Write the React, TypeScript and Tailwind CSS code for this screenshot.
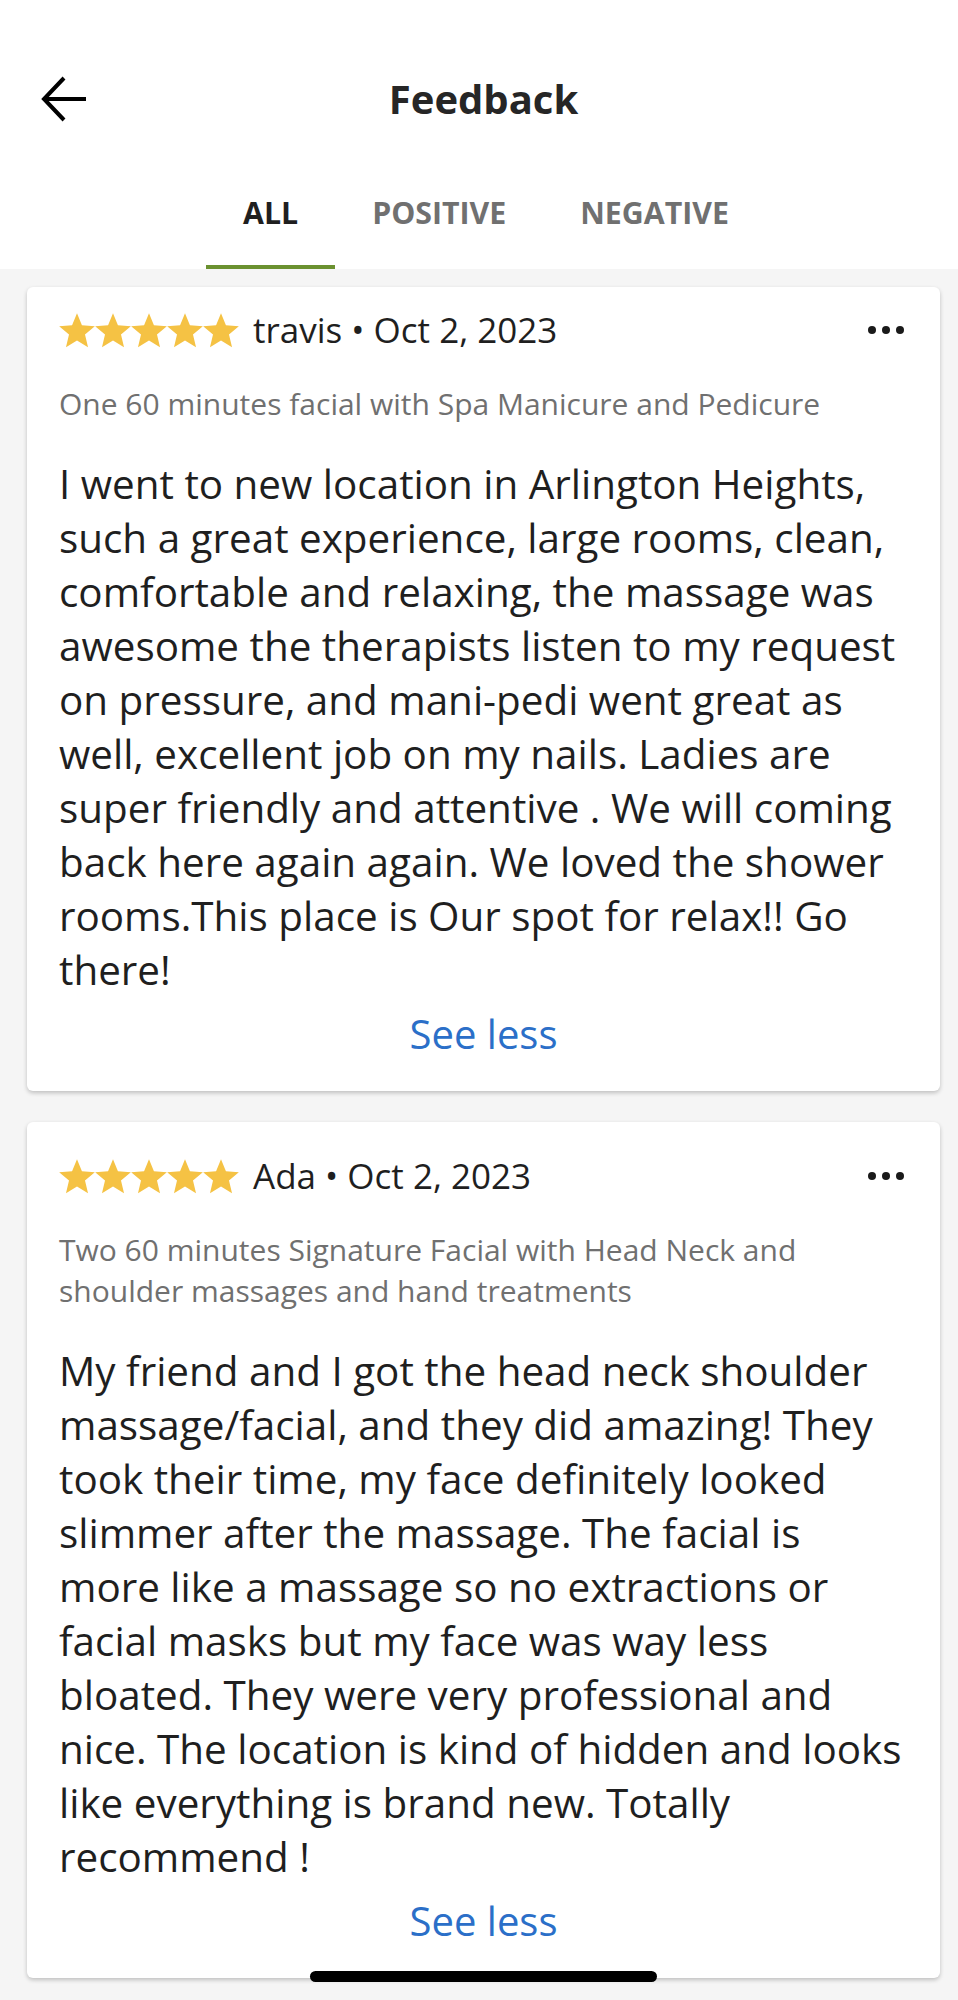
import { useState } from 'react';

type Review = {
  name: string;
  date: string;
  service: string;
  text: string;
};

const reviews: Review[] = [
  {
    name: 'travis',
    date: 'Oct 2, 2023',
    service: 'One 60 minutes facial with Spa Manicure and Pedicure',
    text: 'I went to new location in Arlington Heights, such a great experience, large rooms, clean, comfortable and relaxing, the massage was awesome the therapists listen to my request on pressure, and mani-pedi went great as well, excellent job on my nails. Ladies are super friendly and attentive . We will coming back here again again. We loved the shower rooms.This place is Our spot for relax!! Go there!',
  },
  {
    name: 'Ada',
    date: 'Oct 2, 2023',
    service: 'Two 60 minutes Signature Facial with Head Neck and shoulder massages and hand treatments',
    text: 'My friend and I got the head neck shoulder massage/facial, and they did amazing! They took their time, my face definitely looked slimmer after the massage. The facial is more like a massage so no extractions or facial masks but my face was way less bloated. They were very professional and nice. The location is kind of hidden and looks like everything is brand new. Totally recommend !',
  },
];

const tabs = ['ALL', 'POSITIVE', 'NEGATIVE'];

function Star() {
  return (
    <svg width="36" height="35" viewBox="0 0 24 23" className="shrink-0">
      <polygon
        points="12,0 15.29,7.97 23.89,8.64 17.33,14.23 19.35,22.61 12,18.1 4.65,22.61 6.67,14.23 0.11,8.64 8.71,7.97"
        fill="#f5c244"
      />
    </svg>
  );
}

function ReviewCard({ review, first }: { review: Review; first?: boolean }) {
  return (
    <div
      className={`ml-[27px] w-[913px] bg-white rounded-[6px] shadow-[0_2px_4px_rgba(0,0,0,0.22)] px-[32px] pb-[30px] ${
        first ? 'pt-[25px]' : 'pt-[36px]'
      }`}
    >
      {/* Rating row */}
      <div className="flex items-center h-[36px]">
        <div className="flex">
          {[0, 1, 2, 3, 4].map((i) => (
            <Star key={i} />
          ))}
        </div>
        <span className="ml-[14px] text-[35px] leading-[36px] text-[#1f1f1f]">
          {review.name} • {review.date}
        </span>
        <div className="ml-auto mr-[4px] flex gap-[6px]">
          <span className="w-[8px] h-[8px] rounded-full bg-[#1a1a1a]" />
          <span className="w-[8px] h-[8px] rounded-full bg-[#1a1a1a]" />
          <span className="w-[8px] h-[8px] rounded-full bg-[#1a1a1a]" />
        </div>
      </div>

      <p className="mt-[35px] text-[30px] leading-[41px] text-[#707070]">{review.service}</p>

      <p className="mt-[33px] text-[40.4px] leading-[54px] text-[#1f1f1f]">{review.text}</p>

      <div className="mt-[10px] text-center text-[40px] leading-[54px] text-[#2b6fc8]">See less</div>
    </div>
  );
}

export default function App() {
  const [active, setActive] = useState(0);

  return (
    <div className="relative w-[958px] h-[2000px] overflow-hidden bg-[#f5f5f5] font-['Open_Sans',sans-serif]">
      {/* Header */}
      <header className="bg-white h-[269px]">
        <div className="pt-[70px] grid grid-cols-[1fr_auto_1fr] items-center h-[128px]">
          <button className="pl-[41px] justify-self-start">
            <svg width="45" height="46" viewBox="0 0 45 46" fill="none" stroke="#000" strokeWidth="4">
              <path d="M3 23H45" />
              <path d="M23 2L3 23L23 44" />
            </svg>
          </button>
          <h1 className="pl-[9px] text-[40px] leading-[58px] font-bold text-[#262626]">Feedback</h1>
          <div />
        </div>

        {/* Tabs */}
        <div className="flex pl-[206px]">
          {tabs.map((t, i) => (
            <button key={t} onClick={() => setActive(i)} className="flex flex-col items-stretch">
              <span
                className={`px-[37px] pt-[65px] text-[30.3px] leading-[40px] font-bold ${
                  i === active ? 'text-[#1f1f1f]' : 'text-[#707070]'
                }`}
              >
                {t}
              </span>
              <span className={`mt-[32px] h-[4px] ${i === active ? 'bg-[#6b9130]' : 'bg-transparent'}`} />
            </button>
          ))}
        </div>
      </header>

      {/* List */}
      <div className="pt-[18px] flex flex-col gap-[31px]">
        {reviews.map((r, i) => (
          <ReviewCard key={r.name} review={r} first={i === 0} />
        ))}
      </div>

      {/* Home indicator */}
      <div className="absolute left-[310px] top-[1971px] w-[347px] h-[11px] rounded-full bg-black" />
    </div>
  );
}
